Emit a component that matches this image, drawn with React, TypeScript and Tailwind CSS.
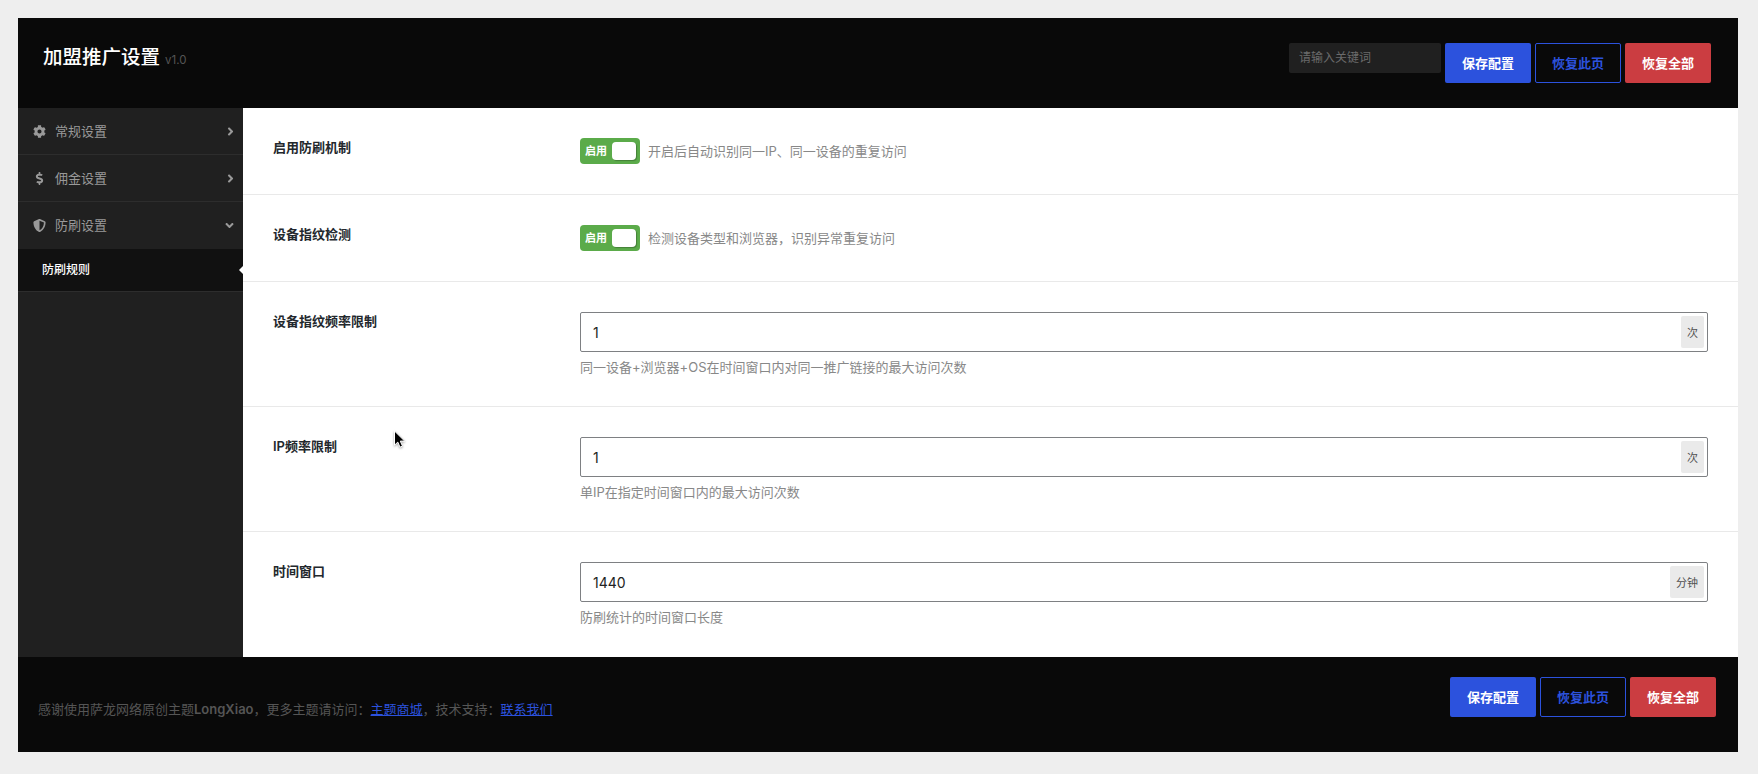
import React, { useState } from 'react';
import { FaAngleDown, FaAngleRight, FaCog, FaDollarSign, FaShieldAlt } from 'react-icons/fa';

type Field = {
  id: string;
  title: string;
  desc: string;
  type: 'switcher' | 'number';
  value?: string;
  unit?: string;
};

const FIELDS: Field[] = [
  { id: 'enable', title: '启用防刷机制', type: 'switcher', desc: '开启后自动识别同一IP、同一设备的重复访问' },
  { id: 'device', title: '设备指纹检测', type: 'switcher', desc: '检测设备类型和浏览器，识别异常重复访问' },
  { id: 'deviceLimit', title: '设备指纹频率限制', type: 'number', value: '1', unit: '次', desc: '同一设备+浏览器+OS在时间窗口内对同一推广链接的最大访问次数' },
  { id: 'ipLimit', title: 'IP频率限制', type: 'number', value: '1', unit: '次', desc: '单IP在指定时间窗口内的最大访问次数' },
  { id: 'window', title: '时间窗口', type: 'number', value: '1440', unit: '分钟', desc: '防刷统计的时间窗口长度' },
];

const MENU = [
  { label: '常规设置', icon: FaCog, open: false },
  { label: '佣金设置', icon: FaDollarSign, open: false },
  { label: '防刷设置', icon: FaShieldAlt, open: true },
];

function Buttons() {
  return (
    <div className="flex gap-1 text-[13px] font-bold">
      <button className="h-10 w-[86px] rounded-xs bg-[#2c52dd] pt-0.5 text-white">保存配置</button>
      <button className="h-10 w-[86px] rounded-xs border border-[#2c52dd] pt-0.5 text-[#2c52dd]">恢复此页</button>
      <button className="h-10 w-[86px] rounded-xs bg-[#cb3d41] pt-0.5 text-white">恢复全部</button>
    </div>
  );
}

function Switcher() {
  const [on, setOn] = useState(true);

  return (
    <button
      onClick={() => setOn(!on)}
      className={`flex h-[26px] w-[60px] items-center justify-between rounded px-1 ${on ? 'bg-[#5bab4a]' : 'flex-row-reverse bg-[#888]'}`}
    >
      <span className="pl-px text-[11px] font-bold leading-none text-white">{on ? '启用' : '禁用'}</span>
      <span className="h-[18px] w-6 rounded bg-white shadow-[1px_1px_1px_rgba(0,0,0,0.25)]" />
    </button>
  );
}

function NumberField({ field }: { field: Field }) {
  return (
    <div className="flex flex-col">
      <div className="flex h-10 items-center rounded-xs border border-[#7e8083] pr-[3px]">
        <input
          defaultValue={field.value}
          className="h-full min-w-0 flex-1 px-3 pt-px font-[Inter] text-sm text-[#222] outline-none"
        />
        <span className="flex h-8 items-center rounded-xs bg-[#eaeaea] px-1.5 pt-0.5 text-[11px] text-[#505050]">{field.unit}</span>
      </div>
      <p className="mt-[5px] text-[13px] leading-5 text-[#888]">{field.desc}</p>
    </div>
  );
}

function Cursor() {
  return (
    <svg className="absolute left-[393px] top-[429px] h-[22px] w-4 drop-shadow-[0_1px_1px_rgba(0,0,0,0.35)]" viewBox="0 0 16 22">
      <path d="M1.5 2v14.2l3.3-3.1 2.2 5.1 2.5-1.1-2.2-5h4.4z" fill="#000" stroke="#fff" strokeWidth="1" />
    </svg>
  );
}

export default function App() {
  return (
    <div className="relative h-[774px] bg-[#eee] p-[18px] pr-5 font-[Inter,'Noto_Sans_CJK_SC',sans-serif] text-[13px]">
      <div className="flex h-[734px] flex-col">
        <header className="flex h-[90px] items-start justify-between bg-[#090909] pl-[25px] pr-[27px] pt-[25px]">
          <h1 className="flex items-baseline pt-px text-[19.5px] font-medium leading-[27px] text-white">
            加盟推广设置
            <small className="ml-[5px] text-[11.5px] font-normal text-[#555]">v1.0</small>
          </h1>
          <div className="flex gap-1">
            <input
              placeholder="请输入关键词"
              className="h-[30px] w-[152px] rounded-xs bg-[#202020] px-2.5 pb-px text-xs text-[#999] outline-none placeholder:text-[#6b6b6b]"
            />
            <Buttons />
          </div>
        </header>

        <div className="flex min-h-0 flex-1">
          <nav className="w-[225px] shrink-0 bg-[#202020] text-[#999]">
            {MENU.map(({ label, icon: Icon, open }) => (
              <div
                key={label}
                className={`flex h-[47px] items-center pl-[15px] ${open ? 'pr-[7px]' : 'border-b border-[#2d2d2d] pr-1.5'}`}
              >
                <Icon size={13} />
                <span className="ml-[9px] flex-1 pt-px">{label}</span>
                {open ? <FaAngleDown size={13} /> : <FaAngleRight size={13} />}
              </div>
            ))}
            <div className="flex h-[43px] items-center justify-between border-b border-[#2d2d2d] bg-[#111] pl-6 text-xs font-medium text-white">
              防刷规则
              <span className="border-y-4 border-r-4 border-y-transparent border-r-white" />
            </div>
          </nav>

          <main className="flex-1 bg-white">
            {FIELDS.map((field) => (
              <section
                key={field.id}
                className={`flex border-b border-[#e9e9e9] px-[30px] pt-[30px] last:border-b-0 ${field.type === 'switcher' ? 'h-[87px]' : 'h-[125px]'}`}
              >
                <h4 className="w-[307px] shrink-0 text-[13px] font-semibold leading-[19px] text-[#23282d]">{field.title}</h4>
                <div className="flex-1">
                  {field.type === 'switcher' ? (
                    <div className="flex items-center gap-2">
                      <Switcher />
                      <span className="pt-0.5 text-[#888]">{field.desc}</span>
                    </div>
                  ) : (
                    <NumberField field={field} />
                  )}
                </div>
              </section>
            ))}
          </main>
        </div>

        <footer className="flex h-[95px] items-start justify-between bg-[#090909] pl-5 pr-[22px] pt-5">
          <p className="pt-[22px] leading-5 text-[#555]">
            感谢使用萨龙网络原创主题<b className="font-semibold">LongXiao</b>，更多主题请访问：
            <a href="#" className="text-[#2c52dd] underline">主题商城</a>，技术支持：
            <a href="#" className="text-[#2c52dd] underline">联系我们</a>
          </p>
          <Buttons />
        </footer>
      </div>
      <Cursor />
    </div>
  );
}
